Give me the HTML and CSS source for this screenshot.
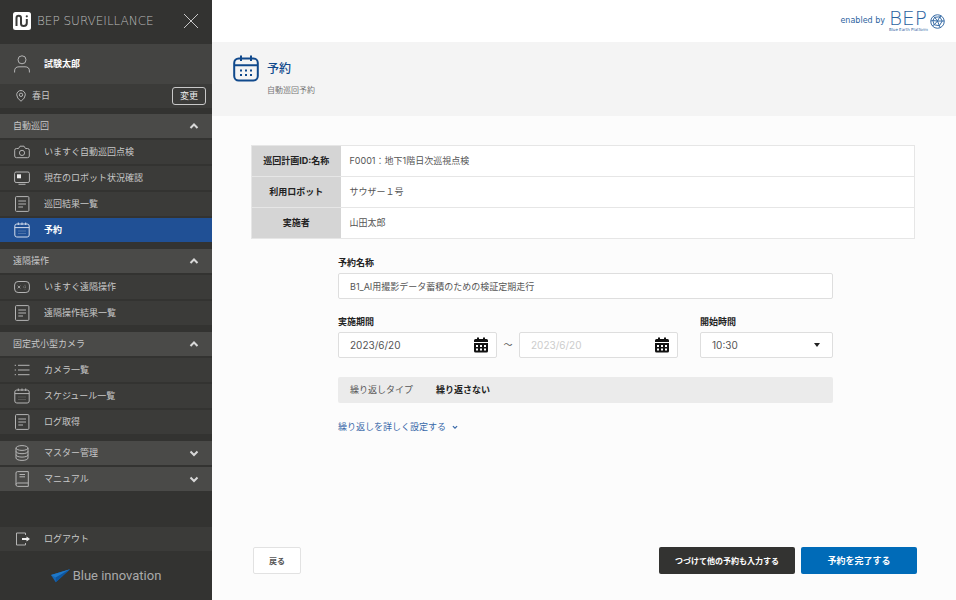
FILE: index.html
```html
<!DOCTYPE html>
<html lang="ja">
<head>
<meta charset="utf-8">
<meta name="viewport" content="width=device-width, initial-scale=1">
<title>予約</title>
<link rel="stylesheet" href="styles.css">
</head>
<body>
<svg class="sprite" aria-hidden="true">
  <symbol id="i-camera" viewBox="0 0 16 16"><path d="M2.500 4.500H4.500L6 2.200H10L11.500 4.500H13.500Q15.300 4.500 15.300 6.200V12Q15.300 13.700 13.500 13.700H2.500Q.700 13.700 .700 12V6.200Q.700 4.500 2.500 4.500Z"/><circle cx="8" cy="8.900" r="2.600"/></symbol>
  <symbol id="i-monitor" viewBox="0 0 16 16"><rect x=".6" y="2" width="14.800" height="10.500" rx="1.500"/><path d="M4.500 14.300H11.500"/><path class="solid" d="M3 4.300H7V8.300H3Z"/></symbol>
  <symbol id="i-doc" viewBox="0 0 16 16"><rect x="1.500" y=".6" width="13.400" height="14.800" rx="1"/><path d="M4.300 5H12M4.300 8H12M4.300 11H9"/></symbol>
  <symbol id="i-calendar" viewBox="0 0 16 16"><rect x=".8" y="2" width="14.400" height="13" rx="2"/><path d="M.8 5.600H15.200M4.300 .5V3M8 .5V3M11.700 .5V3"/><path class="dots" d="M4.500 9H12M4.500 11.500H12"/></symbol>
  <symbol id="i-pad" viewBox="0 0 16 16"><rect x=".6" y="2.500" width="14.800" height="11" rx="3.500"/><path class="fine" d="M3.700 6.700L6.300 9.300M6.300 6.700L3.700 9.300"/><path class="dots" d="M11 5.800V10.500M9 8H13"/></symbol>
  <symbol id="i-list" viewBox="0 0 16 16"><path d="M4 3.300H15.500M4 8H15.500M4 12.700H15.500M.7 3.300H2M.7 8H2M.7 12.700H2"/></symbol>
  <symbol id="i-db" viewBox="0 0 16 16"><ellipse cx="8" cy="3" rx="6" ry="2.400"/><path d="M2 3V13C2 16.200 14 16.200 14 13V3M2 6.300C2 9.500 14 9.500 14 6.300M2 9.700C2 12.900 14 12.900 14 9.700"/></symbol>
  <symbol id="i-book" viewBox="0 0 16 16"><path d="M14.300 12V.6H3.500Q2 .6 2 2V13.700Q2 15.400 3.700 15.400H14.300V12H3.700Q2 12 2 13.700M5.500 3.500H11M5.500 5.800H11"/></symbol>
  <symbol id="i-logout" viewBox="0 0 16 16"><path d="M11.500 4V2H2.500V14H11.500V12"/><path class="arrow" d="M8 8H14"/><path class="solid" d="M12.500 5.500L16 8L12.500 10.500Z"/></symbol>
  <symbol id="i-up" viewBox="0 0 10 10"><path d="M1.500 7L5 3.500L8.500 7"/></symbol>
  <symbol id="i-down" viewBox="0 0 10 10"><path d="M1.500 3.500L5 7L8.500 3.500"/></symbol>
  <symbol id="i-date" viewBox="0 0 14 16"><path fill-rule="evenodd" d="M1.500 2H3V.5H5V2H9V.5H11V2H12.500Q14 2 14 3.500V5H0V3.500Q0 2 1.500 2ZM0 6H14V14Q14 15.500 12.500 15.500H1.500Q0 15.500 0 14ZM2 8V10H4V8ZM6 8V10H8V8ZM10 8V10H12V8ZM2 11.500V13.500H4V11.500ZM6 11.500V13.500H8V11.500ZM10 11.500V13.500H12V11.500Z"/></symbol>
</svg>
<div class="app">
  <aside class="sidebar">
    <div class="brand">
      <svg class="brand-mark" viewBox="0 0 18 18" aria-hidden="true"><rect width="18" height="18" rx="2.500" fill="#fff"/><path d="M3.500 14V6Q3.500 3.700 5.700 3.700Q8 3.700 8 6V11.500Q8 14 10.700 14Q13.800 14 13.800 11V7" fill="none" stroke="#3a3a38" stroke-width="2"/><circle cx="13.800" cy="4.300" r="1.100" fill="#3a3a38"/></svg>
      <span class="brand-name">BEP SURVEILLANCE</span>
      <button class="close" type="button" aria-label="閉じる"><svg viewBox="0 0 16 16"><path d="M1 1L15 15M15 1L1 15"/></svg></button>
    </div>
    <div class="user">
      <svg class="icon user-icon" viewBox="0 0 16 18" aria-hidden="true"><circle cx="8" cy="4.800" r="4"/><path d="M.6 17.500V16Q.6 11.800 5 11.800H11Q15.400 11.800 15.400 16V17.500"/></svg>
      <strong>試験太郎</strong>
    </div>
    <div class="place">
      <svg class="icon pin" viewBox="0 0 10 12" aria-hidden="true"><path d="M5 11.300Q.7 8 .7 4.800A4.300 4.300 0 0 1 9.300 4.800Q9.300 8 5 11.300Z"/><circle cx="5" cy="4.800" r="1.700"/></svg>
      <span>春日</span>
      <button class="change" type="button">変更</button>
    </div>
    <nav class="menu">
      <section class="group">
        <button class="row head" type="button">自動巡回<svg class="chevron"><use href="#i-up"/></svg></button>
        <a class="row" href="#"><svg class="icon"><use href="#i-camera"/></svg>いますぐ自動巡回点検</a>
        <a class="row" href="#"><svg class="icon"><use href="#i-monitor"/></svg>現在のロボット状況確認</a>
        <a class="row" href="#"><svg class="icon"><use href="#i-doc"/></svg>巡回結果一覧</a>
        <a class="row active" href="#" aria-current="page"><svg class="icon"><use href="#i-calendar"/></svg>予約</a>
      </section>
      <section class="group">
        <button class="row head" type="button">遠隔操作<svg class="chevron"><use href="#i-up"/></svg></button>
        <a class="row" href="#"><svg class="icon"><use href="#i-pad"/></svg>いますぐ遠隔操作</a>
        <a class="row" href="#"><svg class="icon"><use href="#i-doc"/></svg>遠隔操作結果一覧</a>
      </section>
      <section class="group">
        <button class="row head" type="button">固定式小型カメラ<svg class="chevron"><use href="#i-up"/></svg></button>
        <a class="row" href="#"><svg class="icon"><use href="#i-list"/></svg>カメラ一覧</a>
        <a class="row" href="#"><svg class="icon"><use href="#i-calendar"/></svg>スケジュール一覧</a>
        <a class="row" href="#"><svg class="icon"><use href="#i-doc"/></svg>ログ取得</a>
      </section>
      <section class="group">
        <button class="row head" type="button"><svg class="icon"><use href="#i-db"/></svg>マスター管理<svg class="chevron"><use href="#i-down"/></svg></button>
        <button class="row head" type="button"><svg class="icon"><use href="#i-book"/></svg>マニュアル<svg class="chevron"><use href="#i-down"/></svg></button>
      </section>
    </nav>
    <div class="side-foot">
      <a class="row" href="#"><svg class="icon"><use href="#i-logout"/></svg>ログアウト</a>
      <div class="company">
        <svg viewBox="0 0 20 14" aria-hidden="true"><path d="M0 6L20 0L5 13.500Z" fill="#1767b5"/><path d="M0 6L20 0L5 8.500Z" fill="#1f78c8"/><path d="M5 8.500L20 0L5 13.500Z" fill="#0d56a0"/></svg>
        <span>Blue innovation</span>
      </div>
    </div>
  </aside>
  <main class="main">
    <header class="topbar">
      <span class="enabled">enabled by</span>
      <span class="bep"><span class="bep-name">BEP</span><span class="bep-sub">Blue Earth Platform</span></span>
      <svg class="globe" viewBox="0 0 16 16" aria-hidden="true"><circle cx="8" cy="8" r="7.200"/><path d="M5 3.500L10.500 3L13 7.500L10 12.500L4.500 11.500L3 7ZM5 3.500L3.500 2.500M10.500 3L12 2M13 7.500H15.200M10 12.500L11 14.600M4.500 11.500L2.500 12.500M3 7L.8 7.500M5 3.500L8 7.500L10.500 3M13 7.500L8 7.500L10 12.500M3 7L8 7.500L4.500 11.500"/></svg>
    </header>
    <div class="banner">
      <svg class="banner-icon" viewBox="0 0 26 27" aria-hidden="true"><rect x="1.200" y="3.500" width="23.600" height="22" rx="4.500"/><path d="M1.200 10.300H24.800M8 .5V6M18 .5V6"/><path class="banner-dots" d="M7 15.500H20M7 20H20"/></svg>
      <div>
        <h1>予約</h1>
        <p>自動巡回予約</p>
      </div>
    </div>
    <form class="content">
      <table class="summary">
        <tbody>
          <tr><th scope="row">巡回計画ID:名称</th><td>F0001：地下1階日次巡視点検</td></tr>
          <tr><th scope="row">利用ロボット</th><td>サウザー１号</td></tr>
          <tr><th scope="row">実施者</th><td>山田太郎</td></tr>
        </tbody>
      </table>
      <div class="fields">
        <div class="field">
          <label for="name">予約名称</label>
          <input id="name" class="control" type="text" value="B1_AI用撮影データ蓄積のための検証定期走行">
        </div>
        <div class="schedule">
          <div class="field period">
            <label for="from">実施期間</label>
            <div class="range">
              <div class="control date"><input id="from" type="text" value="2023/6/20"><button type="button" aria-label="開始日を選ぶ"><svg><use href="#i-date"/></svg></button></div>
              <span class="tilde">〜</span>
              <div class="control date"><input type="text" placeholder="2023/6/20" aria-label="終了日"><button type="button" aria-label="終了日を選ぶ"><svg><use href="#i-date"/></svg></button></div>
            </div>
          </div>
          <div class="field time">
            <label for="time">開始時間</label>
            <div class="select-wrap">
              <select id="time" class="control number"><option>10:30</option></select>
            </div>
          </div>
        </div>
        <div class="repeat"><span>繰り返しタイプ</span><strong>繰り返さない</strong></div>
        <a class="more" href="#">繰り返しを詳しく設定する<svg><use href="#i-down"/></svg></a>
      </div>
      <div class="actions">
        <button class="btn back" type="button">戻る</button>
        <button class="btn again" type="button">つづけて他の予約も入力する</button>
        <button class="btn done" type="submit">予約を完了する</button>
      </div>
    </form>
  </main>
</div>
</body>
</html>
```
FILE: styles.css
```css
* {
  box-sizing: border-box;
}

body {
  margin: 0;
  color: #555;
  background: #fcfcfc;
  font: 9px/14px Inter, "Noto Sans CJK JP", sans-serif;
}

button,
input,
select {
  margin: 0;
  padding: 0;
  border: 0;
  background: none;
  color: inherit;
  font: inherit;
}

a {
  color: inherit;
  text-decoration: none;
}

svg {
  flex: none;
}

.sprite {
  position: absolute;
  width: 0;
  height: 0;
}

.app {
  display: flex;
  min-height: 100vh;
}

/* Sidebar */
.sidebar {
  display: flex;
  flex: none;
  flex-direction: column;
  width: 212px;
  background: #333331;
  color: #c8c8c8;
}

.brand {
  display: flex;
  align-items: center;
  height: 44px;
  padding: 2px 13px 4px;
}

.brand-mark {
  width: 18px;
  height: 18px;
  margin-right: 6px;
}

.brand-name {
  color: #bbb;
  font-family: "DejaVu Sans", sans-serif;
  font-size: 12px;
  font-weight: 200;
  white-space: nowrap;
}

.close {
  width: 16px;
  height: 16px;
  margin-left: auto;
}

.close svg {
  display: block;
  width: 16px;
  height: 16px;
  stroke: #c8c8c8;
}

.icon {
  width: 16px;
  height: 16px;
  margin: 0 14px 0 1px;
  fill: none;
  stroke: #b4b4b4;
  stroke-width: 1;
}

.solid {
  fill: #eee;
  stroke: none;
}

.arrow {
  stroke: #eee;
  stroke-width: 2;
}

.dots {
  stroke-dasharray: 1 1;
  opacity: .5;
}

.fine {
  stroke-width: .8;
}

.user {
  display: flex;
  align-items: center;
  height: 40px;
  padding: 0 13px;
  background: #444442;
  color: #fff;
}

.user .user-icon {
  height: 18px;
}

.place {
  display: flex;
  align-items: center;
  height: 24px;
  margin-bottom: 6px;
  padding: 0 6px 0 16px;
  background: #3b3b39;
}

.place .pin {
  width: 10px;
  height: 12px;
  margin: 0 6px 0 0;
}

.change {
  width: 34px;
  height: 18px;
  margin-left: auto;
  border: 1px solid #c8c8c8;
  border-radius: 3px;
  color: #eee;
}

.group {
  display: flex;
  flex-direction: column;
  gap: 2px;
  margin-bottom: 7px;
}

.row {
  display: flex;
  align-items: center;
  width: 100%;
  height: 24px;
  padding: 0 13px;
  background: #3b3b39;
  text-align: left;
}

.head {
  background: #4a4a48;
}

.active {
  background: #205095;
  color: #fff;
  font-weight: 700;
}

.active .icon {
  stroke: #d4dceb;
}

.chevron {
  width: 10px;
  height: 10px;
  margin-left: auto;
  fill: none;
  stroke: #d8d8d8;
  stroke-width: 2;
}

.side-foot {
  margin-top: auto;
}

.company {
  display: flex;
  align-items: center;
  justify-content: center;
  gap: 3px;
  height: 49px;
  color: #aaa;
  font: 13px/16px Roboto, sans-serif;
}

.company svg {
  width: 19px;
  height: 14px;
}

/* Main column */
.main {
  display: flex;
  flex: 1;
  flex-direction: column;
  min-width: 0;
}

.topbar {
  display: flex;
  align-items: center;
  justify-content: flex-end;
  height: 42px;
  padding: 0 11px;
  background: #fff;
  color: #2c63a0;
  font-family: "DejaVu Sans", sans-serif;
}

.enabled {
  margin-right: 4px;
  font-size: 8px;
}

.bep {
  display: flex;
  flex-direction: column;
  margin-right: 2px;
}

.bep-name {
  font-size: 20px;
  font-weight: 200;
  line-height: 18px;
}

.bep-sub {
  font-size: 4px;
  line-height: 6px;
}

.globe {
  width: 15px;
  height: 15px;
  fill: none;
  stroke: #2c63a0;
  stroke-width: 1;
}

.banner {
  display: flex;
  gap: 8px;
  height: 74px;
  padding: 13px 21px;
  background: #f4f4f4;
}

.banner-icon {
  width: 26px;
  height: 27px;
  fill: none;
  stroke: #10498c;
  stroke-width: 2;
}

.banner-dots {
  stroke-dasharray: 2 3;
}

.banner h1 {
  margin: 6px 0 7px;
  color: #10498c;
  font-size: 12px;
  font-weight: 500;
  line-height: 16px;
}

.banner p {
  margin: 0;
  color: #777;
  font-size: 8px;
  line-height: 12px;
}

.content {
  display: flex;
  flex: 1;
  flex-direction: column;
  padding: 29px 39px 26px;
}

.summary {
  margin-right: 2px;
  border: 1px solid #e6e6e6;
  border-collapse: collapse;
  background: #fff;
}

.summary th,
.summary td {
  height: 31px;
  padding: 0 9px;
  border-bottom: 1px solid #e6e6e6;
  text-align: left;
}

.summary th {
  width: 89px;
  padding: 0;
  background: #d5d5d5;
  color: #222;
  font-weight: 700;
  text-align: center;
}

.fields {
  display: flex;
  flex-direction: column;
  padding: 17px 84px 0 87px;
}

.field {
  display: flex;
  flex-direction: column;
  gap: 3px;
}

.field label {
  color: #222;
  font-weight: 700;
}

.control {
  width: 100%;
  height: 26px;
  padding: 0 11px;
  border: 1px solid #dedede;
  border-radius: 2px;
  background: #fff;
}

.schedule {
  display: flex;
  gap: 22px;
  margin: 16px 0 19px;
}

.period {
  flex: 1;
}

.range {
  display: flex;
  align-items: center;
}

.date {
  display: flex;
  flex: 1;
  align-items: center;
  min-width: 0;
  padding-right: 8px;
  font-size: 10px;
}

.date input {
  flex: 1;
  width: 0;
}

.date input::placeholder {
  color: #ccc;
}

.date svg {
  display: block;
  width: 14px;
  height: 16px;
  fill: #111;
}

.tilde {
  width: 22px;
  text-align: center;
}

.time {
  width: 133px;
}

.select-wrap {
  position: relative;
}

.select-wrap::after {
  position: absolute;
  top: 11px;
  right: 13px;
  border: 3px solid transparent;
  border-top: 4px solid #222;
  border-bottom: 0;
  content: "";
  pointer-events: none;
}

.number {
  font-size: 10px;
  appearance: none;
}

.repeat {
  display: flex;
  gap: 23px;
  align-items: center;
  height: 26px;
  padding: 0 12px;
  border-radius: 2px;
  background: #ebebeb;
}

.repeat strong {
  color: #222;
}

.more {
  display: flex;
  gap: 6px;
  align-items: center;
  align-self: flex-start;
  margin-top: 17px;
  color: #3868a8;
}

.more svg {
  width: 6px;
  height: 6px;
  fill: none;
  stroke: #3868a8;
  stroke-width: 2;
}

.actions {
  display: flex;
  gap: 6px;
  margin: auto 0 0 2px;
}

.btn {
  height: 27px;
  border-radius: 2px;
  font-weight: 700;
}

.back {
  width: 48px;
  margin-right: auto;
  border: 1px solid #e2e2e2;
  background: #fff;
  font-size: 8px;
}

.again {
  width: 136px;
  background: #333331;
  color: #fff;
  font-size: 8px;
}

.done {
  width: 116px;
  background: #006bb8;
  color: #fff;
}
```
